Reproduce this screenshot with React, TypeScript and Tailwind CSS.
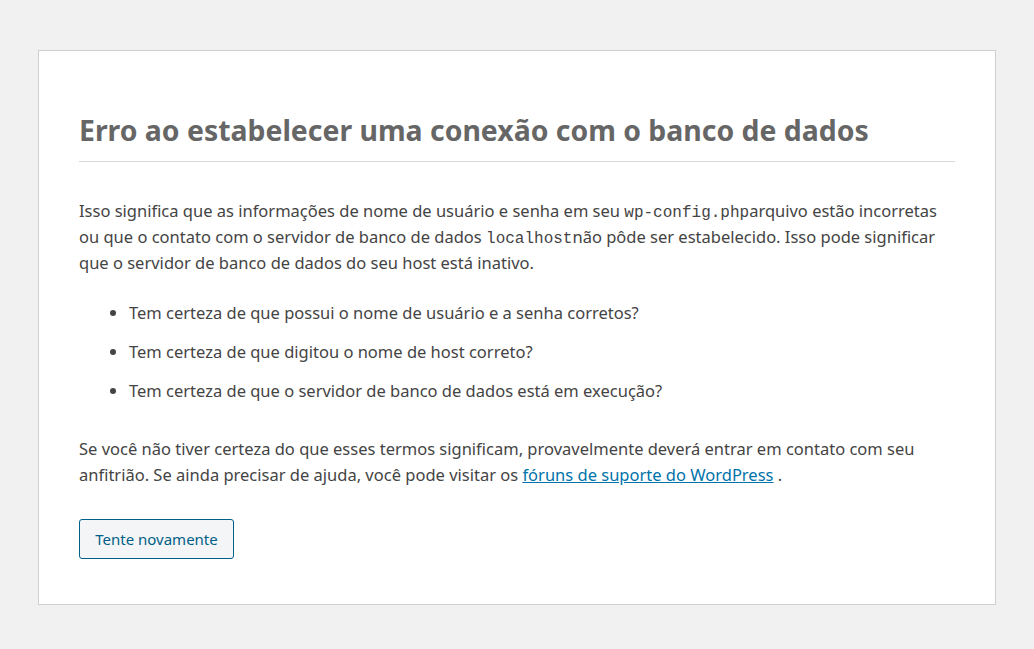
const mono = { fontFamily: '"Liberation Mono", "DejaVu Sans Mono", monospace' };

export default function App() {
  return (
    <div
      className="min-h-[649px] bg-[#f1f1f1] pt-[50px] pb-[44px] text-[#444]"
      style={{ fontFamily: '"Segoe UI", "Noto Sans", "Liberation Sans", sans-serif' }}
    >
      <div className="mx-auto w-[958px] border border-[#ccd0d4] bg-white px-[40px] pt-[61px] pb-[45px]">
        <h1 className="m-0 border-b border-[#dadada] pb-[13px] text-[28.4px] font-bold leading-[36px] text-[#666]">
          Erro ao estabelecer uma conexão com o banco de dados
        </h1>
        <p className="mt-[36px] text-[16.5px] leading-[26px]">
          Isso significa que as informações de nome de usuário e senha em seu{" "}
          <code className="text-[16px] leading-none" style={mono}>
            wp-config.php
          </code>
          arquivo estão incorretas ou que o contato com o servidor de banco de dados{" "}
          <code className="text-[16px] leading-none" style={mono}>
            localhost
          </code>
          não pôde ser estabelecido. Isso pode significar que o servidor de banco de dados do seu host está inativo.
        </p>
        <ul className="mt-[24px] flex list-disc flex-col gap-[13px] pl-[50px] text-[16.5px] leading-[26px]">
          <li>Tem certeza de que possui o nome de usuário e a senha corretos?</li>
          <li>Tem certeza de que digitou o nome de host correto?</li>
          <li>Tem certeza de que o servidor de banco de dados está em execução?</li>
        </ul>
        <p className="mt-[32px] text-[16.5px] leading-[26px]">
          Se você não tiver certeza do que esses termos significam, provavelmente deverá entrar em contato com seu
          anfitrião. Se ainda precisar de ajuda, você pode visitar os{" "}
          <a href="#" className="text-[#0073aa] underline">
            fóruns de suporte do WordPress
          </a>{" "}
          .
        </p>
        <div className="mt-[31px]">
          <button className="h-[40px] w-[155px] rounded-[3px] border border-[#016087] bg-[#f3f5f6] text-[15px] text-[#016087]">
            Tente novamente
          </button>
        </div>
      </div>
    </div>
  );
}
